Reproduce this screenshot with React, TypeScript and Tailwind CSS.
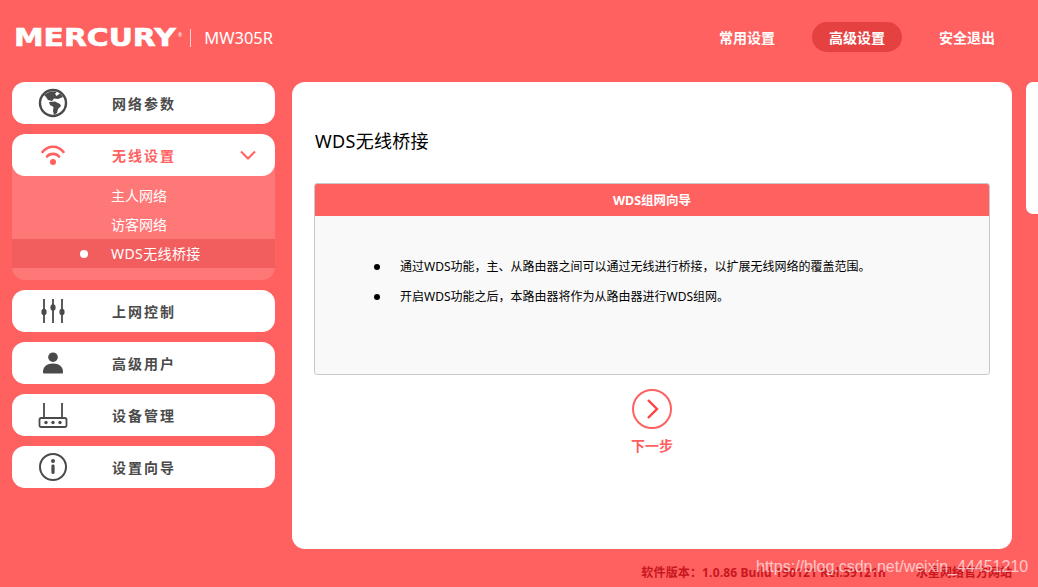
import { ReactNode } from 'react'

const GlobeIcon = () => (
  <svg width="30" height="30" viewBox="0 0 30 30">
    <circle cx="15" cy="15" r="13" fill="none" stroke="#4a4a4a" strokeWidth="2.4" />
    <path d="M6 7 L12 3.5 L19 3.5 L17 6 L18.5 8 L22 5.5 L25 9 L20 11 L16 10.5 L14 13 L10 12 L8 9 Z" fill="#4a4a4a" />
    <path d="M11 14 L17 13.5 L22 16 L23 18 L20 21 L19 25 L16 27 L15 23 L15.5 19 L12 17 Z" fill="#4a4a4a" />
  </svg>
)

const WifiIcon = () => (
  <svg width="24" height="20" viewBox="0 0 24 20" fill="none" stroke="#ff6060" strokeWidth="2.6" strokeLinecap="round">
    <path d="M1.5 7 C7 0 17 0 22.5 7" />
    <path d="M6 11.5 C9 8 15 8 18 11.5" />
    <circle cx="12" cy="17" r="3" fill="#ff6060" stroke="none" />
  </svg>
)

const SlidersIcon = () => (
  <svg width="26" height="26" viewBox="0 0 26 26" fill="#4a4a4a" stroke="#4a4a4a">
    <path d="M4 1 V25 M13 1 V25 M22 1 V25" strokeWidth="1.8" fill="none" />
    <ellipse cx="4" cy="14" rx="2.6" ry="3.2" stroke="none" />
    <ellipse cx="13" cy="9.5" rx="2.6" ry="3.2" stroke="none" />
    <ellipse cx="22" cy="14" rx="2.6" ry="3.2" stroke="none" />
  </svg>
)

const UserIcon = () => (
  <svg width="20" height="22" viewBox="0 0 20 22" fill="#4a4a4a">
    <circle cx="10" cy="5.2" r="4.8" />
    <path d="M1 21.5 C0.2 21.5 0 20.8 0 20 C0 14.5 4 11.5 10 11.5 C16 11.5 20 14.5 20 20 C20 20.8 19.8 21.5 19 21.5 Z" />
  </svg>
)

const RouterIcon = () => (
  <svg width="30" height="26" viewBox="0 0 30 26" fill="none" stroke="#4a4a4a" strokeWidth="1.8">
    <path d="M6 1 V16 M24 1 V16" />
    <rect x="1.5" y="16" width="27" height="9" rx="1.8" />
    <circle cx="8" cy="20.5" r="1.7" fill="#4a4a4a" stroke="none" />
    <circle cx="15" cy="20.5" r="1.7" fill="#4a4a4a" stroke="none" />
    <circle cx="22" cy="20.5" r="1.7" fill="#4a4a4a" stroke="none" />
  </svg>
)

const InfoIcon = () => (
  <svg width="30" height="30" viewBox="0 0 30 30" fill="#4a4a4a">
    <circle cx="15" cy="15" r="13" fill="none" stroke="#4a4a4a" strokeWidth="2" />
    <circle cx="15" cy="9" r="2" />
    <rect x="13.4" y="12.5" width="3.2" height="9.5" rx="1.4" />
  </svg>
)

const NavItem = ({ icon, label }: { icon: ReactNode; label: string }) => (
  <div className="flex h-[42px] items-center rounded-[13px] bg-white">
    <div className="flex w-[82px] justify-center">{icon}</div>
    <span className="ml-[18px] text-[14px] font-bold tracking-[2px] text-[#4a4a4a]">{label}</span>
  </div>
)

const App = () => {
  return (
    <div
      className="relative flex h-[587px] w-[1038px] flex-col overflow-hidden bg-[#ff6060]"
      style={{ fontFamily: '"Noto Sans", "Noto Sans CJK SC", sans-serif' }}
    >
      {/* Header */}
      <div className="flex h-[82px] shrink-0 items-start">
        <div className="mt-[26px] flex items-center pl-[14px]">
          <span
            className="w-[162px] origin-left scale-x-[1.24] text-[24px] leading-[22px] font-bold whitespace-nowrap text-white [-webkit-text-stroke:0.6px_white]"
            style={{ fontFamily: '"DejaVu Sans", sans-serif' }}
          >
            MERCURY
          </span>
          <span className="-mt-[6px] ml-[2px] text-[5px] leading-none text-white">®</span>
          <span className="ml-[8px] h-[18px] w-px bg-[#ffd0d0]" />
          <span className="ml-[13px] text-[16.5px] leading-[24px] text-white">MW305R</span>
        </div>
        <div className="mt-[22px] mr-[42px] ml-auto flex items-center text-[14px] font-bold text-white">
          <span className="mr-[37px]">常用设置</span>
          <span className="flex h-[30px] w-[90px] items-center justify-center rounded-[15px] bg-[#e54141]">高级设置</span>
          <span className="ml-[37px] w-[57px]">安全退出</span>
        </div>
      </div>

      {/* Body */}
      <div className="flex h-[467px] shrink-0 items-start pl-[12px]">
        <div className="flex w-[263px] shrink-0 flex-col gap-[10px]">
          <NavItem icon={<GlobeIcon />} label="网络参数" />

          <div className="overflow-hidden rounded-[13px] bg-[#ff7878]">
            <div className="flex h-[42px] items-center rounded-[13px] bg-white">
              <div className="flex w-[82px] justify-center">
                <WifiIcon />
              </div>
              <span className="ml-[18px] text-[14px] font-bold tracking-[2px] text-[#ff6060]">无线设置</span>
              <svg className="mr-[19px] ml-auto" width="16" height="10" viewBox="0 0 16 10" fill="none" stroke="#ff6060" strokeWidth="2">
                <path d="M1 1.5 L8 8.5 L15 1.5" />
              </svg>
            </div>
            <div className="pt-[5px] pb-[12px] text-[14px] text-white">
              <div className="flex h-[29px] items-center pl-[99px]">主人网络</div>
              <div className="flex h-[29px] items-center pl-[99px]">访客网络</div>
              <div className="flex h-[29px] items-center bg-[#f25e5e]">
                <span className="ml-[68px] h-[8px] w-[8px] rounded-full bg-white" />
                <span className="ml-[23px] tracking-[0.4px]">WDS无线桥接</span>
              </div>
            </div>
          </div>

          <NavItem icon={<SlidersIcon />} label="上网控制" />
          <NavItem icon={<UserIcon />} label="高级用户" />
          <NavItem icon={<RouterIcon />} label="设备管理" />
          <NavItem icon={<InfoIcon />} label="设置向导" />
        </div>

        {/* Main panel */}
        <div className="ml-[17px] flex h-[467px] w-[720px] shrink-0 flex-col rounded-[13px] bg-white px-[22px]">
          <h1 className="mt-[44px] ml-px text-[18px] leading-[30px] tracking-[0.3px] text-black">WDS无线桥接</h1>
          <div className="mt-[27px] h-[192px] overflow-hidden rounded-[3px] border border-[#c8c8c8] bg-[#f9f9f9]">
            <div className="flex h-[32px] items-center justify-center bg-[#ff6060] pt-[3px] text-[12.5px] font-bold text-white">
              WDS组网向导
            </div>
            <ul className="mt-[42px] flex flex-col gap-[12px] text-[12px] leading-[18px] text-black">
              <li className="flex items-center">
                <span className="ml-[59px] h-[6px] w-[6px] rounded-full bg-black" />
                <span className="ml-[20px]">通过WDS功能，主、从路由器之间可以通过无线进行桥接，以扩展无线网络的覆盖范围。</span>
              </li>
              <li className="flex items-center">
                <span className="ml-[59px] h-[6px] w-[6px] rounded-full bg-black" />
                <span className="ml-[20px]">开启WDS功能之后，本路由器将作为从路由器进行WDS组网。</span>
              </li>
            </ul>
          </div>
          <div className="mt-[14px] flex flex-col items-center">
            <svg width="40" height="40" viewBox="0 0 40 40" fill="none">
              <circle cx="20" cy="20" r="19" stroke="#ff6060" strokeWidth="2" />
              <path d="M16 11 L25 20 L16 29" stroke="#ff4040" strokeWidth="2.4" />
            </svg>
            <span className="mt-[7px] text-[14px] leading-[20px] font-bold text-[#ff6060]">下一步</span>
          </div>
        </div>

        {/* Right panel */}
        <div className="ml-[14px] h-[132px] grow rounded-l-[7px] bg-white" />
      </div>

      {/* Footer */}
      <div className="mt-[15px] flex justify-end pr-[26px] text-[12px] leading-[18px] font-bold whitespace-nowrap text-[#c8171e]">
        <span className="tracking-[0.15px]">软件版本：1.0.86 Build 190121 Rel.59121n</span>
        <span className="ml-[30px]">水星网络官方网站</span>
      </div>

      {/* Watermark */}
      <span
        className="absolute top-[557px] left-[756px] text-[16px] leading-[20px] whitespace-nowrap text-white/65"
        style={{ fontFamily: '"Liberation Sans", sans-serif' }}
      >
        https://blog.csdn.net/weixin_44451210
      </span>
    </div>
  )
}

export default App
